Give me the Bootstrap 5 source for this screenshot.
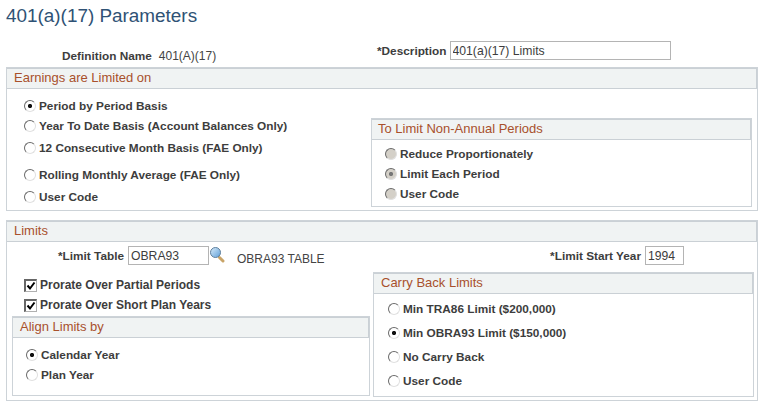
<!doctype html>
<html lang="en"><head><meta charset="utf-8"><title>401(a)(17) Parameters</title>
<link href="https://cdn.jsdelivr.net/npm/bootstrap@5.3.0/dist/css/bootstrap.min.css" rel="stylesheet">
<style>
html,body{height:408px;overflow:hidden}
body{background:#fff;font-family:"Liberation Sans",Arial,sans-serif;font-size:11.8px;color:#3d3d3d;padding:0 4px 0 6px}
.pg-title{font-size:18.9px;font-weight:400;color:#2f5275;margin:0;height:41px;padding-top:5px;line-height:22px}
.pg-meta{height:26px}
.meta-l{width:371px;padding:8px 0 0 56px;line-height:14px}
.lbl{font-weight:700;color:#3d3d3d;margin:0}
.val{color:#444;font-size:12px}
.meta-gap{margin-right:7px}
.box,.box-thin{border:1px solid #cdd3d8}
.box-head{background:#f0f3f3;border:solid #cad0d5;border-width:1px 1px 1px 0;height:21px;line-height:17px;color:#a8502c;font-size:13px;padding-left:6px;margin:0;font-weight:400}
.box>.box-head{padding-left:7px}
.tf{height:19px;border:1px solid #b4b4b4;padding:0 2px;font-size:12.2px;font-family:inherit;color:#3d3d3d;background:#fff;border-radius:0;outline:0}
.tf-desc{width:221px}.tf-tab{width:81px}.tf-yr{width:39px}
.form-check.opt{display:flex;align-items:center;min-height:0;margin:0;padding:0;height:20px;gap:3px}
.form-check.opt.g2{margin-top:2px}
.form-check.opt.g7{margin-top:7px}
.opt .form-check-input{width:12px;height:12px;margin:0 0 3px;float:none;flex:none;border:1px solid;border-color:#6a6a6a #e0e0e0 #e0e0e0 #6a6a6a;box-shadow:none;background-image:none;background-color:#fff}
.opt .form-check-input:checked{background-color:#fff;border-color:#6a6a6a #e0e0e0 #e0e0e0 #6a6a6a;background-image:radial-gradient(circle,#111 0 1.8px,transparent 2.4px)}
.opt .form-check-input[disabled]{background-color:#d4d0c8;opacity:1}
.opt .form-check-input[disabled]:checked{background-color:#d4d0c8;background-image:radial-gradient(circle,#777 0 1.8px,transparent 2.4px)}
.opt .form-check-input[disabled]~.form-check-label{opacity:1;color:#3d3d3d}
.opt .form-check-input[type=checkbox]{width:13px;height:13px;margin:0;border-radius:0;border-color:#666 #b0b0b0 #b0b0b0 #666;border-width:2px 1px 1px 2px;background-image:none}
.opt .form-check-input[type=checkbox]:checked{background-color:#fff;border-color:#666 #b0b0b0 #b0b0b0 #666;background-image:url("data:image/svg+xml,%3Csvg xmlns='http://www.w3.org/2000/svg' viewBox='0 0 10 10'%3E%3Cpath d='M1.5 4.5 4 7.5 8.5 1.5' fill='none' stroke='%23000' stroke-width='2'/%3E%3C/svg%3E");background-size:100% 100%}
.opt .form-check-label{font-weight:700;color:#3d3d3d;opacity:1}
.chk .opt .form-check-label{font-size:12px}
.p1{height:144px;margin-bottom:9px}
.p2{height:181px}
.left1{width:364px;padding:8px 0 0 17px}
.right1{margin-top:29px;width:381px}
.sub1{height:89px}
.sub1 .lst{padding:5px 0 0 13px}
.lim-top{height:30px;padding:4px 73px 0 51px}
.req{margin-right:4px;padding-top:2px}
.req3{margin-right:3px}
.left2{width:358px;margin-left:5px}
.chk{padding:3px 0 0 12px}
.sub2{margin-top:1px;height:80px}
.sub2 .lst{padding:8px 0 0 13px}
.sub2 .box-head,.right2 .box-head{padding-left:7px}
.right2{width:381px;margin-left:3px;height:125px}
.right2 .lst{padding:4px 0 0 14px}
.h24b{height:24px!important}
.mag{margin:1px 0 0 1px;flex:none}
.lim-desc{margin-left:12px;padding-top:4px;color:#444;font-size:12px}
.lim-b{margin-left:auto}
</style></head><body>
<h1 class="pg-title">401(a)(17) Parameters</h1>
<div class="d-flex pg-meta">
<div class="meta-l"><span class="lbl meta-gap">Definition Name</span><span class="val">401(A)(17)</span></div>
<div class="d-flex align-items-start"><label class="lbl req req3" for="ds">*Description</label><input id="ds" class="tf tf-desc" value="401(a)(17) Limits"></div>
</div>
<section class="box p1">
<h2 class="box-head">Earnings are Limited on</h2>
<div class="d-flex">
<div class="left1">
<div class="form-check opt"><input class="form-check-input" type="radio" name="a" id="a1" checked><label class="form-check-label" for="a1">Period by Period Basis</label></div>
<div class="form-check opt"><input class="form-check-input" type="radio" name="a" id="a2"><label class="form-check-label" for="a2">Year To Date Basis (Account Balances Only)</label></div>
<div class="form-check opt g2"><input class="form-check-input" type="radio" name="a" id="a3"><label class="form-check-label" for="a3">12 Consecutive Month Basis (FAE Only)</label></div>
<div class="form-check opt g7"><input class="form-check-input" type="radio" name="a" id="a4"><label class="form-check-label" for="a4">Rolling Monthly Average (FAE Only)</label></div>
<div class="form-check opt g2"><input class="form-check-input" type="radio" name="a" id="a5"><label class="form-check-label" for="a5">User Code</label></div>
</div>
<div class="right1">
<section class="box-thin sub1">
<h3 class="box-head">To Limit Non-Annual Periods</h3>
<div class="lst">
<div class="form-check opt"><input class="form-check-input" type="radio" name="b" id="b1" disabled><label class="form-check-label" for="b1">Reduce Proportionately</label></div>
<div class="form-check opt"><input class="form-check-input" type="radio" name="b" id="b2" checked disabled><label class="form-check-label" for="b2">Limit Each Period</label></div>
<div class="form-check opt"><input class="form-check-input" type="radio" name="b" id="b3" disabled><label class="form-check-label" for="b3">User Code</label></div>
</div>
</section>
</div>
</div>
</section>
<section class="box p2">
<h2 class="box-head">Limits</h2>
<div class="d-flex align-items-start lim-top">
<label class="lbl req" for="lt">*Limit Table</label><input id="lt" class="tf tf-tab" value="OBRA93">
<svg class="mag" width="15" height="16" viewBox="0 0 15 16" role="img" aria-label="Look up"><defs><linearGradient id="lens" x1="0" y1="0" x2="1" y2="1"><stop offset="0" stop-color="#d8ecfa"/><stop offset="1" stop-color="#5f9fd8"/></linearGradient></defs><path d="M9.5 10.5 13 14" stroke="#c9a468" stroke-width="3" stroke-linecap="round"/><circle cx="5.5" cy="5.5" r="5" fill="url(#lens)" stroke="#5e7f9c"/></svg>
<span class="lim-desc">OBRA93 TABLE</span>
<div class="d-flex align-items-start lim-b"><label class="lbl req" for="yr">*Limit Start Year</label><input id="yr" class="tf tf-yr" value="1994"></div>
</div>
<div class="d-flex">
<div class="left2">
<div class="chk">
<div class="form-check opt"><input class="form-check-input" type="checkbox" id="c1" checked><label class="form-check-label" for="c1">Prorate Over Partial Periods</label></div>
<div class="form-check opt"><input class="form-check-input" type="checkbox" id="c2" checked><label class="form-check-label" for="c2">Prorate Over Short Plan Years</label></div>
</div>
<section class="box-thin sub2">
<h3 class="box-head">Align Limits by</h3>
<div class="lst">
<div class="form-check opt"><input class="form-check-input" type="radio" name="d" id="d1" checked><label class="form-check-label" for="d1">Calendar Year</label></div>
<div class="form-check opt"><input class="form-check-input" type="radio" name="d" id="d2"><label class="form-check-label" for="d2">Plan Year</label></div>
</div>
</section>
</div>
<section class="box-thin right2">
<h3 class="box-head">Carry Back Limits</h3>
<div class="lst">
<div class="form-check opt h24b"><input class="form-check-input" type="radio" name="e" id="e1"><label class="form-check-label" for="e1">Min TRA86 Limit ($200,000)</label></div>
<div class="form-check opt h24b"><input class="form-check-input" type="radio" name="e" id="e2" checked><label class="form-check-label" for="e2">Min OBRA93 Limit ($150,000)</label></div>
<div class="form-check opt h24b"><input class="form-check-input" type="radio" name="e" id="e3"><label class="form-check-label" for="e3">No Carry Back</label></div>
<div class="form-check opt h24b"><input class="form-check-input" type="radio" name="e" id="e4"><label class="form-check-label" for="e4">User Code</label></div>
</div>
</section>
</div>
</section>
</body></html>
